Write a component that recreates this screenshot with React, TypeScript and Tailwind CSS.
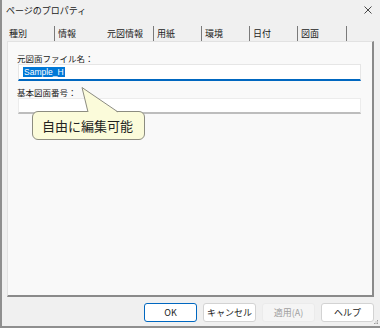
import React from 'react';

const tabs = [
  { label: '種別', w: 'w-[49px]', sep: true },
  { label: '情報', w: 'w-[49px]', sep: false },
  { label: '元図情報', w: 'w-[50px]', sep: true },
  { label: '用紙', w: 'w-[48px]', sep: true },
  { label: '環境', w: 'w-[48px]', sep: true },
  { label: '日付', w: 'w-[48px]', sep: true },
  { label: '図面', w: 'w-[49px]', sep: true },
];

function Button({ children, primary, disabled }: { children: React.ReactNode; primary?: boolean; disabled?: boolean }) {
  return (
    <button
      disabled={disabled}
      className={
        'w-[53px] h-[19px] rounded-[3px] text-[9px] leading-none flex items-center justify-center ' +
        (primary
          ? 'bg-white border border-[#0067c0] text-[#1b1b1b]'
          : disabled
          ? 'bg-[#f5f5f5] border border-[#ebebeb] text-[#a0a0a0]'
          : 'bg-white border border-[#d3d3d3] text-[#1b1b1b]')
      }
    >
      {children}
    </button>
  );
}

export default function App() {
  return (
    <div className="relative w-[380px] h-[328px] bg-[#f0f0f0] border-l-2 border-b-2 border-[#8f8f8f] flex flex-col text-[#1b1b1b] font-['Noto_Sans_CJK_JP',sans-serif]">
      {/* title bar */}
      <div className="h-[26px] flex items-start justify-between pl-[4px] pr-[8px] pt-[5px]">
        <span className="text-[9px] leading-[12px]">ページのプロパティ</span>
        <svg width="8" height="8" viewBox="0 0 8 8" className="mt-[1px]">
          <path d="M0.5 0.5 L7.5 7.5 M7.5 0.5 L0.5 7.5" stroke="#333" strokeWidth="0.9" />
        </svg>
      </div>

      {/* tabs */}
      <div className="h-[15px] flex pl-[4px]">
        {tabs.map((t) => (
          <div
            key={t.label}
            className={
              t.w +
              ' h-full flex items-center pl-[3px] text-[9px] leading-none ' +
              (t.sep ? 'border-r border-[#7a7a7a]' : '')
            }
          >
            {t.label}
          </div>
        ))}
      </div>

      {/* panel */}
      <div className="ml-[5px] w-[367px] h-[256px] bg-[#f9f9f9] border-t border-l border-[#e2e2e2] border-r-2 border-b-2 border-r-[#8a8a8a] border-b-[#8a8a8a] pl-[9px] pt-[11px] flex flex-col">
        <div className="text-[8.5px] leading-[11px] h-[11px]">元図面ファイル名：</div>
        <div className="ml-[1px] w-[343px] h-[17px] bg-white border border-[#e6e6e6] border-b-2 border-b-[#0067c0] flex items-center pl-[4px]">
          <span className="bg-[#0078d7] text-white text-[8.5px] leading-[10px] px-[1px] font-['Liberation_Sans',sans-serif]">Sample_H</span>
        </div>
        <div className="mt-[6px] text-[8.5px] leading-[11px] h-[11px]">基本図面番号：</div>
        <div className="ml-[1px] w-[343px] h-[16px] bg-white border border-[#ececec] border-b-2 border-b-[#bdbdbd]" />
      </div>

      {/* footer */}
      <div className="flex-1 flex justify-end items-start gap-[6px] pr-[6px] pt-[6px]">
        <Button primary>OK</Button>
        <Button>キャンセル</Button>
        <Button disabled>適用(A)</Button>
        <Button>ヘルプ</Button>
      </div>

      {/* callout */}
      <div className="absolute left-[30px] top-[111px] w-[113px] h-[29px] rounded-[6px] bg-[#fbfbda] border border-[#8c8c80] flex items-center pl-[9px] text-[13px] leading-none text-[#222]">
        自由に編集可能
      </div>
      <svg className="absolute left-[76px] top-[86px]" width="46" height="27" viewBox="0 0 46 27">
        <polygon points="4,1.5 10,26.5 40,26.5" fill="#fbfbda" />
        <polyline points="10,26 4,1.5 40,26" fill="none" stroke="#8c8c80" strokeWidth="1" />
      </svg>

      {/* resize grip */}
      <svg className="absolute right-[1px] bottom-[1px]" width="5" height="5" viewBox="0 0 5 5">
        <rect x="3" y="0" width="1" height="1" fill="#9a9a9a" />
        <rect x="1.5" y="1.5" width="1" height="1" fill="#9a9a9a" />
        <rect x="3" y="1.5" width="1" height="1" fill="#9a9a9a" />
        <rect x="0" y="3" width="1" height="1" fill="#9a9a9a" />
        <rect x="1.5" y="3" width="1" height="1" fill="#9a9a9a" />
        <rect x="3" y="3" width="1" height="1" fill="#9a9a9a" />
      </svg>
    </div>
  );
}
